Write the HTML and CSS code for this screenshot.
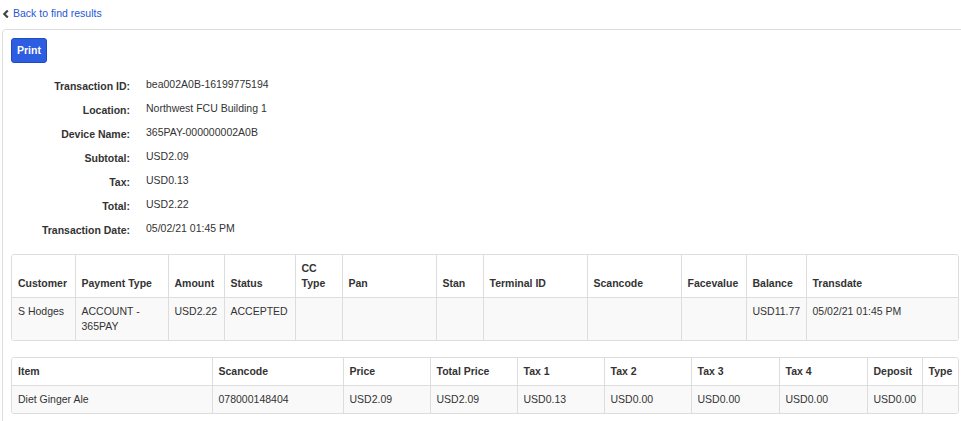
FILE: index.html
```html
<!DOCTYPE html>
<html>
<head>
<meta charset="utf-8">
<link rel="stylesheet" href="styles.css">
</head>
<body>
<div class="topbar">
  <a class="back" href="#"><svg class="chev" width="6" height="8" viewBox="0 0 6 8"><path d="M4.8 0.5 L1.3 4 L4.8 7.5" fill="none" stroke="#444" stroke-width="2.2"/></svg>Back to find results</a>
</div>
<div class="panel">
  <button class="btn">Print</button>
  <div class="details">
    <div class="lbl">Transaction ID:</div><div class="val">bea002A0B-16199775194</div>
    <div class="lbl">Location:</div><div class="val">Northwest FCU Building 1</div>
    <div class="lbl">Device Name:</div><div class="val">365PAY-000000002A0B</div>
    <div class="lbl">Subtotal:</div><div class="val">USD2.09</div>
    <div class="lbl">Tax:</div><div class="val">USD0.13</div>
    <div class="lbl">Total:</div><div class="val">USD2.22</div>
    <div class="lbl">Transaction Date:</div><div class="val">05/02/21 01:45 PM</div>
  </div>
  <div class="tbox">
    <table class="grid">
      <colgroup>
        <col style="width:63px"><col style="width:93px"><col style="width:56px"><col style="width:71px"><col style="width:47px"><col style="width:94px"><col style="width:47px"><col style="width:104px"><col style="width:94px"><col style="width:65px"><col style="width:60px"><col>
      </colgroup>
      <thead>
        <tr><th>Customer</th><th>Payment Type</th><th>Amount</th><th>Status</th><th>CC<br>Type</th><th>Pan</th><th>Stan</th><th>Terminal ID</th><th>Scancode</th><th>Facevalue</th><th>Balance</th><th>Transdate</th></tr>
      </thead>
      <tbody>
        <tr><td>S Hodges</td><td>ACCOUNT -<br>365PAY</td><td>USD2.22</td><td>ACCEPTED</td><td></td><td></td><td></td><td></td><td></td><td></td><td>USD11.77</td><td>05/02/21 01:45 PM</td></tr>
      </tbody>
    </table>
  </div>
  <div class="tbox">
    <table class="grid">
      <colgroup>
        <col style="width:200px"><col style="width:131px"><col style="width:87px"><col style="width:87px"><col style="width:87px"><col style="width:87px"><col style="width:88px"><col style="width:88px"><col style="width:55px"><col>
      </colgroup>
      <thead>
        <tr><th>Item</th><th>Scancode</th><th>Price</th><th>Total Price</th><th>Tax 1</th><th>Tax 2</th><th>Tax 3</th><th>Tax 4</th><th>Deposit</th><th>Type</th></tr>
      </thead>
      <tbody>
        <tr><td>Diet Ginger Ale</td><td>078000148404</td><td>USD2.09</td><td>USD2.09</td><td>USD0.13</td><td>USD0.00</td><td>USD0.00</td><td>USD0.00</td><td>USD0.00</td><td></td></tr>
      </tbody>
    </table>
  </div>
</div>
</body>
</html>
```

FILE: styles.css
```css
html { overflow: hidden; }
body {
  margin: 0;
  font-family: "Liberation Sans", Arial, sans-serif;
  font-size: 10.5px;
  line-height: 15px;
  color: #333;
  background: #fff;
}
.topbar {
  height: 29px;
  padding: 6px 0 0 3px;
  box-sizing: border-box;
}
.back {
  color: #2457d6;
  text-decoration: none;
  display: inline-flex;
  align-items: center;
}
.chev {
  margin-right: 4px;
}
.panel {
  margin-left: 2px;
  margin-right: -12px;
  border: 1px solid #ddd;
  border-radius: 4px 0 0 0;
  padding: 8px 8px 0 8px;
  height: 400px;
  overflow: hidden;
}
.btn {
  display: block;
  font-family: inherit;
  font-size: 10.5px;
  font-weight: bold;
  line-height: 15px;
  color: #fff;
  background: #2d5de0;
  border: 1px solid #1f4ac2;
  border-radius: 3px;
  padding: 4px 5px;
  cursor: pointer;
}
.details {
  display: grid;
  grid-template-columns: 119px auto;
  column-gap: 16px;
  grid-auto-rows: 24px;
  margin-top: 11px;
  margin-bottom: 12px;
}
.lbl {
  text-align: right;
  font-weight: bold;
  padding-top: 5px;
}
.val {
  padding-top: 3px;
}
.tbox {
  border: 1px solid #ddd;
  border-radius: 3px;
  margin-bottom: 16px;
  overflow: hidden;
  width: 946px;
}
.grid {
  border-collapse: collapse;
  table-layout: fixed;
  width: 100%;
}
.grid th, .grid td {
  border-left: 1px solid #ddd;
  padding: 6px;
  text-align: left;
}
.grid th:first-child, .grid td:first-child { border-left: 0; }
.grid th {
  font-weight: bold;
  vertical-align: bottom;
  border-bottom: 1px solid #ddd;
  background: #fff;
}
.grid td {
  vertical-align: top;
  background: #f9f9f9;
}
```
